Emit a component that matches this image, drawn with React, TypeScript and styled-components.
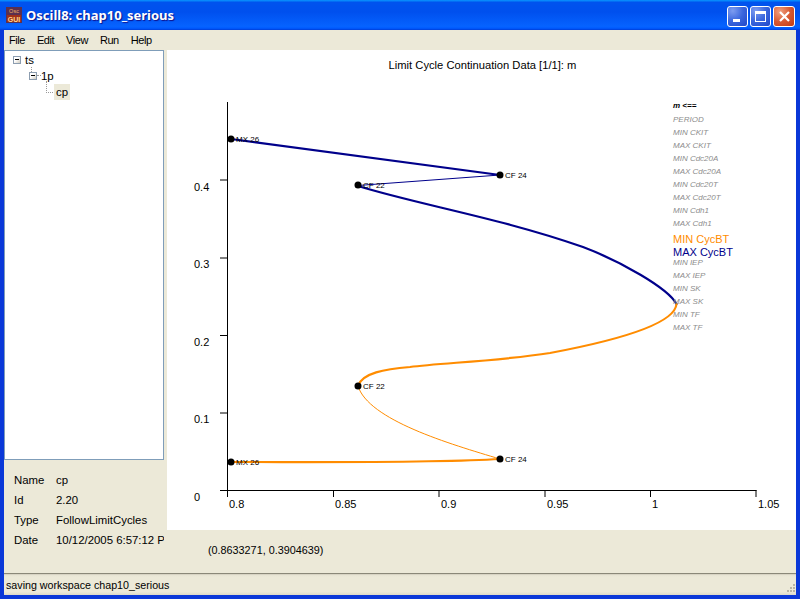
import React, { FC } from "react";
import styled, { createGlobalStyle } from "styled-components";

const GlobalStyle = createGlobalStyle`
  html, body {
    margin: 0;
    padding: 0;
    background: #0831d9;
    overflow: hidden;
  }
  * {
    box-sizing: border-box;
  }
`;

const Window = styled.div`
  width: 800px;
  height: 599px;
  display: flex;
  flex-direction: column;
  overflow: hidden;
  background: #0a38d8;
  font-family: "Liberation Sans", Arial, sans-serif;
  font-size: 11px;
  color: #000;
`;

const TitleBar = styled.div`
  height: 30px;
  flex: none;
  display: flex;
  align-items: center;
  padding: 0 5px 0 6px;
  background: linear-gradient(
    180deg,
    #0997ff 0,
    #0053ee 8%,
    #0050ee 40%,
    #0663ff 88%,
    #005bff 94%,
    #003dd7 100%
  );
`;

const AppIcon = styled.svg`
  width: 16px;
  height: 16px;
  flex: none;
`;

const TitleText = styled.div`
  margin-left: 4px;
  flex: 1;
  color: #fff;
  font-family: "Noto Sans", sans-serif;
  font-size: 13px;
  font-weight: 700;
  text-shadow: 1px 1px 1px #0f1089;
`;

const CaptionButtons = styled.div`
  display: flex;
  gap: 2px;
  margin-top: 2px;
`;

const CaptionButton = styled.div<{ $close?: boolean }>`
  width: ${(p) => (p.$close ? "22px" : "21px")};
  height: 21px;
  border: 1px solid #fff;
  border-radius: 3px;
  display: flex;
  align-items: center;
  justify-content: center;
  background: ${(p) =>
    p.$close
      ? "radial-gradient(circle at 30% 25%, #f0a080 0, #d85a33 50%, #c23a12 100%)"
      : "radial-gradient(circle at 25% 20%, #7d9cf0 0, #3a66dd 50%, #2047c8 100%)"};
`;

const Client = styled.div`
  flex: 1;
  min-height: 0;
  margin: 0 4px 4px;
  display: flex;
  flex-direction: column;
  background: #ece9d8;
`;

const MenuBar = styled.div`
  height: 20px;
  flex: none;
  display: flex;
  align-items: center;
  gap: 12px;
  padding: 0 0 1px 5px;
`;

const MenuItem = styled.span`
  font-size: 11px;
  letter-spacing: -0.45px;
`;

const Main = styled.div`
  flex: 1;
  min-height: 0;
  display: flex;
  gap: 3px;
`;

const LeftColumn = styled.div`
  width: 160px;
  flex: none;
  display: flex;
  flex-direction: column;
  overflow: hidden;
`;

const TreePanel = styled.div`
  height: 410px;
  flex: none;
  padding: 1px 0 0;
  background: #fff;
  border: 1px solid #7f9db9;
`;

const TreeRow = styled.div<{ $depth: number }>`
  position: relative;
  height: 16px;
  display: flex;
  align-items: center;
  padding-left: ${(p) => 8 + p.$depth * 16}px;
`;

const Expander = styled.span`
  position: relative;
  width: 8px;
  height: 8px;
  flex: none;
  border: 1px solid #8c9db0;
  background: linear-gradient(135deg, #fff 40%, #d0ccc0 100%);

  &::after {
    content: "";
    position: absolute;
    left: 1px;
    top: 2px;
    width: 4px;
    height: 1px;
    background: #000;
  }
`;

// one dotted guide of the tree, placed relative to its row
const Connector = styled.span<{ $left: number; $top: number; $w: number; $h: number }>`
  position: absolute;
  left: ${(p) => p.$left}px;
  top: ${(p) => p.$top}px;
  width: ${(p) => p.$w}px;
  height: ${(p) => p.$h}px;
  border-left: ${(p) => (p.$h > 0 ? "1px dotted #999" : "none")};
  border-bottom: ${(p) => (p.$w > 0 ? "1px dotted #999" : "none")};
`;

const TreeLabel = styled.span<{ $selected?: boolean }>`
  margin-left: ${(p) => (p.$selected ? "9px" : "2px")};
  padding: 0 2px;
  height: 16px;
  line-height: 16px;
  font-size: 11.4px;
  background: ${(p) => (p.$selected ? "#ece9d8" : "transparent")};
`;

const InfoGrid = styled.div`
  display: grid;
  grid-template-columns: 42px 200px;
  grid-auto-rows: 20px;
  align-items: center;
  padding: 10px 0 0 10px;
  font-size: 11.4px;
  white-space: nowrap;
`;

const RightColumn = styled.div`
  flex: 1;
  min-width: 0;
  display: flex;
  flex-direction: column;
`;

const ChartPanel = styled.div`
  height: 480px;
  flex: none;
  background: #fff;
`;

const ChartSvg = styled.svg`
  display: block;
  width: 629px;
  height: 480px;
  font-family: "Liberation Sans", Arial, sans-serif;
`;

const CoordText = styled.div`
  padding: 14px 0 0 41px;
  font-size: 10.8px;
`;

const StatusBar = styled.div`
  height: 22px;
  flex: none;
  display: flex;
  align-items: center;
  justify-content: space-between;
  padding: 1px 0 0 2px;
  font-size: 10.7px;
  border-top: 1px solid #8a8878;
  box-shadow: inset 0 1px 0 #d8d4c4;
  background: linear-gradient(180deg, #e4e1d0 0, #ece9d8 15%, #ece9d8 85%, #dcd9c8 100%);
`;

const Grip = styled.svg`
  width: 12px;
  height: 12px;
  align-self: flex-end;
`;

const menus = ["File", "Edit", "View", "Run", "Help"];

const info = [
  ["Name", "cp"],
  ["Id", "2.20"],
  ["Type", "FollowLimitCycles"],
  ["Date", "10/12/2005 6:57:12 PM"],
];

// chart coordinates are page pixels minus the panel origin (167, 50)
const ox = 167;
const oy = 50;

const xTicks = [
  { x: 228, labelX: 229, label: "0.8" },
  { x: 333.5, labelX: 335, label: "0.85" },
  { x: 439, labelX: 441, label: "0.9" },
  { x: 545, labelX: 547, label: "0.95" },
  { x: 650.5, labelX: 652, label: "1" },
  { x: 756, labelX: 758, label: "1.05" },
];

const yTicks = [
  { y: 180, labelY: 191, label: "0.4" },
  { y: 258, labelY: 268, label: "0.3" },
  { y: 335.5, labelY: 346, label: "0.2" },
  { y: 413, labelY: 423, label: "0.1" },
  { y: 490.5, labelY: 501, label: "0" },
];

const points = [
  { x: 231, y: 139, label: "MX 26" },
  { x: 500, y: 175, label: "CF 24" },
  { x: 358, y: 185, label: "CF 22" },
  { x: 358, y: 386, label: "CF 22" },
  { x: 500, y: 459, label: "CF 24" },
  { x: 231, y: 462, label: "MX 26" },
];

const legend = [
  { y: 108, label: "m <==", active: "#000", bold: true },
  { y: 122, label: "PERIOD" },
  { y: 135, label: "MIN CKIT" },
  { y: 148, label: "MAX CKIT" },
  { y: 161, label: "MIN Cdc20A" },
  { y: 174, label: "MAX Cdc20A" },
  { y: 187, label: "MIN Cdc20T" },
  { y: 200, label: "MAX Cdc20T" },
  { y: 213, label: "MIN Cdh1" },
  { y: 226, label: "MAX Cdh1" },
  { y: 243, label: "MIN CycBT", active: "#ff8c00" },
  { y: 256, label: "MAX CycBT", active: "#00008b" },
  { y: 265, label: "MIN IEP" },
  { y: 278, label: "MAX IEP" },
  { y: 291, label: "MIN SK" },
  { y: 304, label: "MAX SK" },
  { y: 317, label: "MIN TF" },
  { y: 330, label: "MAX TF" },
];

const Chart: FC = () => (
  <ChartSvg viewBox={`${ox} ${oy} 629 480`}>
    <text x={482.5} y={69} fontSize={11.2} textAnchor="middle">
      Limit Cycle Continuation Data [1/1]: m
    </text>

    <g stroke="#000" strokeWidth={1}>
      <line x1={227.5} y1={102} x2={227.5} y2={497} />
      <line x1={220} y1={490.5} x2={756.5} y2={490.5} />
      {xTicks.slice(1).map((t) => (
        <line key={t.label} x1={t.x} y1={490} x2={t.x} y2={497} />
      ))}
      {yTicks.slice(0, 4).map((t) => (
        <line key={t.label} x1={220} y1={t.y} x2={227} y2={t.y} />
      ))}
    </g>
    <g fontSize={11} fill="#000">
      {xTicks.map((t) => (
        <text key={t.label} x={t.labelX} y={508}>
          {t.label}
        </text>
      ))}
      {yTicks.map((t) => (
        <text key={t.label} x={194} y={t.labelY}>
          {t.label}
        </text>
      ))}
    </g>

    <g fill="none" strokeLinecap="round">
      <path d="M231 139 L500 175" stroke="#00008b" strokeWidth={2.2} />
      <path d="M500 175 L358 185.5" stroke="#00008b" strokeWidth={1} />
      <path
        d="M358 186 C420 205 500 218 583 247 C620 261 668 288 676.5 304"
        stroke="#00008b"
        strokeWidth={2.2}
      />
      <path
        d="M676.5 304 C675 322 630 338 550 353 C500 361 440 363 410 367 C385 369 362 373 358 386"
        stroke="#ff8c00"
        strokeWidth={2.2}
      />
      <path d="M358 386 C368 420 450 444 500 459" stroke="#ff8c00" strokeWidth={1} />
      <path d="M500 459 C440 463 330 462 231 462" stroke="#ff8c00" strokeWidth={2.2} />
    </g>

    {points.map((p, i) => (
      <g key={i}>
        <circle cx={p.x} cy={p.y} r={3.5} fill="#000" />
        <text x={p.x + 5} y={p.y + 3} fontSize={8} fill="#000">
          {p.label}
        </text>
      </g>
    ))}

    {legend.map((l) => (
      <text
        key={l.label}
        x={673}
        y={l.y}
        fontSize={l.active && !l.bold ? 11 : 8}
        fontStyle={l.active && !l.bold ? "normal" : "italic"}
        fontWeight={l.bold ? 700 : 400}
        fill={l.active ?? "#8c8c8c"}
      >
        {l.label}
      </text>
    ))}
  </ChartSvg>
);

const App: FC = () => (
  <Window>
    <GlobalStyle />
    <TitleBar>
      <AppIcon viewBox="0 0 16 16">
        <rect width="16" height="16" fill="#5a3050" />
        <rect x="1" y="8" width="14" height="7" fill="#a03018" />
        <text x="8" y="6" fontSize="5.5" fill="#f0b060" textAnchor="middle" fontFamily="Liberation Sans">
          Osc
        </text>
        <text x="8" y="14.5" fontSize="7" fontWeight="700" fill="#ffd890" textAnchor="middle" fontFamily="Liberation Sans">
          GUI
        </text>
      </AppIcon>
      <TitleText>Oscill8: chap10_serious</TitleText>
      <CaptionButtons>
        <CaptionButton>
          <svg width="13" height="13" viewBox="0 0 13 13">
            <rect x="2" y="9" width="7" height="3" fill="#fff" />
          </svg>
        </CaptionButton>
        <CaptionButton>
          <svg width="13" height="13" viewBox="0 0 13 13">
            <rect x="1.5" y="2.5" width="10" height="9" fill="none" stroke="#fff" />
            <rect x="1" y="1" width="11" height="3" fill="#fff" />
          </svg>
        </CaptionButton>
        <CaptionButton $close>
          <svg width="13" height="13" viewBox="0 0 13 13">
            <path d="M2 2 L11 11 M11 2 L2 11" stroke="#fff" strokeWidth="2.2" />
          </svg>
        </CaptionButton>
      </CaptionButtons>
    </TitleBar>
    <Client>
      <MenuBar>
        {menus.map((m) => (
          <MenuItem key={m}>{m}</MenuItem>
        ))}
      </MenuBar>
      <Main>
        <LeftColumn>
          <TreePanel>
            <TreeRow $depth={0}>
              <Expander />
              <TreeLabel>ts</TreeLabel>
            </TreeRow>
            <TreeRow $depth={1}>
              <Connector $left={26} $top={-1} $w={0} $h={5} />
              <Connector $left={32} $top={7} $w={4} $h={0} />
              <Expander />
              <TreeLabel>1p</TreeLabel>
            </TreeRow>
            <TreeRow $depth={2}>
              <Connector $left={41} $top={-3} $w={7} $h={12} />
              <TreeLabel $selected>cp</TreeLabel>
            </TreeRow>
          </TreePanel>
          <InfoGrid>
            {info.map(([k, v]) => (
              <React.Fragment key={k}>
                <span>{k}</span>
                <span>{v}</span>
              </React.Fragment>
            ))}
          </InfoGrid>
        </LeftColumn>
        <RightColumn>
          <ChartPanel>
            <Chart />
          </ChartPanel>
          <CoordText>(0.8633271, 0.3904639)</CoordText>
        </RightColumn>
      </Main>
      <StatusBar>
        <span>saving workspace chap10_serious</span>
        <Grip viewBox="0 0 12 12">
          <g fill="#b8b4a4">
            <rect x="9" y="1" width="2" height="2" />
            <rect x="6" y="4" width="2" height="2" />
            <rect x="9" y="4" width="2" height="2" />
            <rect x="3" y="7" width="2" height="2" />
            <rect x="6" y="7" width="2" height="2" />
            <rect x="9" y="7" width="2" height="2" />
          </g>
        </Grip>
      </StatusBar>
    </Client>
  </Window>
);

export default App;
